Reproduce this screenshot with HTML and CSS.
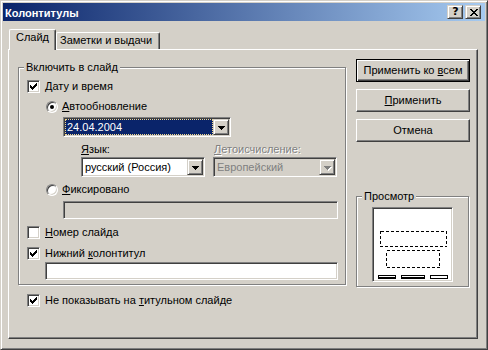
FILE: index.html
```html
<!DOCTYPE html>
<html lang="ru">
<head>
<meta charset="utf-8">
<title>Колонтитулы</title>
<link rel="stylesheet" href="styles.css">
</head>
<body>
<div class="window">
  <div class="titlebar">
    <span class="title">Колонтитулы</span>
    <div class="caption-buttons">
      <span class="cap-btn help">?</span>
      <span class="cap-btn close"><svg width="8" height="7" viewBox="0 0 8 7" shape-rendering="crispEdges"><path d="M0 0h2v1h-2z M6 0h2v1h-2z M1 1h2v1h-2z M5 1h2v1h-2z M2 2h4v1h-4z M3 3h2v1h-2z M2 4h4v1h-4z M1 5h2v1h-2z M5 5h2v1h-2z M0 6h2v1h-2z M6 6h2v1h-2z" fill="#000"/></svg></span>
    </div>
  </div>
  <div class="client">
    <div class="tabs">
      <div class="tab active">Слайд</div>
      <div class="tab">Заметки и выдачи</div>
    </div>
    <div class="panel">
      <div class="left-col">
        <fieldset class="group main-group">
          <legend>Включить в слайд</legend>
          <div class="row">
            <span class="cb"><svg class="check" width="11" height="11" viewBox="0 0 11 11" shape-rendering="crispEdges"><path d="M8 2h1v1h-1z M7 3h2v1h-2z M2 4h1v1h-1z M6 4h3v1h-3z M2 5h2v1h-2z M5 5h3v1h-3z M2 6h5v1h-5z M3 7h3v1h-3z M4 8h1v1h-1z" fill="#000"/></svg></span>
            <span><u>Д</u>ату и время</span>
          </div>
          <div class="sub">
            <div class="row row-radio1">
              <span class="rb on"></span>
              <span><u>А</u>втообновление</span>
            </div>
            <div class="combo date">
              <div class="combo-field selected">24.04.2004</div>
              <span class="drop"><svg width="7" height="4" viewBox="0 0 7 4" shape-rendering="crispEdges"><path d="M0 0h7v1h-1v1h-1v1h-1v1h-1v-1h-1v-1h-1v-1h-1z" fill="#000"/></svg></span>
            </div>
            <div class="lang-grid">
              <span class="lbl"><u>Я</u>зык:</span>
              <span class="lbl disabled"><u>Л</u>етоисчисление:</span>
              <div class="combo">
                <div class="combo-field">русский (Россия)</div>
                <span class="drop"><svg width="7" height="4" viewBox="0 0 7 4" shape-rendering="crispEdges"><path d="M0 0h7v1h-1v1h-1v1h-1v1h-1v-1h-1v-1h-1v-1h-1z" fill="#000"/></svg></span>
              </div>
              <div class="combo off">
                <div class="combo-field">Европейский</div>
                <span class="drop"><svg width="8" height="5" viewBox="0 0 8 5" shape-rendering="crispEdges"><path d="M1 1h7v1h-1v1h-1v1h-1v1h-1v-1h-1v-1h-1v-1h-1z" fill="#fff"/><path d="M0 0h7v1h-1v1h-1v1h-1v1h-1v-1h-1v-1h-1v-1h-1z" fill="#808080"/></svg></span>
              </div>
            </div>
            <div class="row row-radio2">
              <span class="rb"></span>
              <span><u>Ф</u>иксировано</span>
            </div>
            <div class="edit off fixed"></div>
          </div>
          <div class="row row-num">
            <span class="cb"></span>
            <span><u>Н</u>омер слайда</span>
          </div>
          <div class="row row-footer">
            <span class="cb"><svg class="check" width="11" height="11" viewBox="0 0 11 11" shape-rendering="crispEdges"><path d="M8 2h1v1h-1z M7 3h2v1h-2z M2 4h1v1h-1z M6 4h3v1h-3z M2 5h2v1h-2z M5 5h3v1h-3z M2 6h5v1h-5z M3 7h3v1h-3z M4 8h1v1h-1z" fill="#000"/></svg></span>
            <span>Нижний <u>к</u>олонтитул</span>
          </div>
          <div class="edit footer-edit"></div>
        </fieldset>
        <div class="row row-title">
          <span class="cb"><svg class="check" width="11" height="11" viewBox="0 0 11 11" shape-rendering="crispEdges"><path d="M8 2h1v1h-1z M7 3h2v1h-2z M2 4h1v1h-1z M6 4h3v1h-3z M2 5h2v1h-2z M5 5h3v1h-3z M2 6h5v1h-5z M3 7h3v1h-3z M4 8h1v1h-1z" fill="#000"/></svg></span>
          <span>Не показывать на <u>т</u>итульном слайде</span>
        </div>
      </div>
      <div class="right-col">
        <div class="btn default"><span>Применить ко <u>в</u>сем</span></div>
        <div class="btn"><span><u>П</u>рименить</span></div>
        <div class="btn"><span>Отмена</span></div>
        <fieldset class="group preview-group">
          <legend>Просмотр</legend>
          <div class="preview">
            <svg width="77" height="71" viewBox="0 0 77 71" shape-rendering="crispEdges">
              <rect x="6.5" y="22.5" width="66" height="15" fill="none" stroke="#000" stroke-width="1" stroke-dasharray="3 2"/>
              <rect x="12.5" y="41.5" width="53" height="17" fill="none" stroke="#000" stroke-width="1" stroke-dasharray="3 2"/>
              <rect x="4" y="66" width="18" height="4" fill="#000"/>
              <rect x="5" y="67" width="16" height="1" fill="#fff"/>
              <rect x="27" y="66" width="24" height="4" fill="#000"/>
              <rect x="28" y="67" width="22" height="1" fill="#fff"/>
              <rect x="56.5" y="66.5" width="17" height="3" fill="#fff" stroke="#000" stroke-width="1"/>
            </svg>
          </div>
        </fieldset>
      </div>
    </div>
  </div>
</div>
</body>
</html>
```

FILE: styles.css
```css
* {
  box-sizing: border-box;
}

html,
body {
  margin: 0;
  padding: 0;
}

body {
  width: 488px;
  height: 350px;
  overflow: hidden;
  background: #d4d0c8;
  color: #000;
  font: 11px/13px "Liberation Sans", Arial, sans-serif;
}

u {
  text-decoration: underline;
  text-underline-offset: 1px;
}

.window {
  width: 488px;
  height: 350px;
  display: flex;
  flex-direction: column;
  padding: 2px;
  background: #d4d0c8;
  border: 1px solid;
  border-color: #d4d0c8 #404040 #404040 #d4d0c8;
  box-shadow: inset 1px 1px 0 #fff, inset -1px -1px 0 #808080;
}

/* title bar */
.titlebar {
  height: 18px;
  flex: none;
  display: flex;
  align-items: center;
  padding-left: 2px;
  background: linear-gradient(to right, #0a246a, #a6caf0);
}

.title {
  color: #fff;
  font: bold 11px/18px "Liberation Sans", Arial, sans-serif;
  padding-top: 1px;
}

.caption-buttons {
  margin-left: auto;
  margin-right: 4px;
  display: flex;
  gap: 2px;
}

.cap-btn {
  width: 16px;
  height: 14px;
  display: flex;
  align-items: center;
  justify-content: center;
  background: #d4d0c8;
  border: 1px solid;
  border-color: #d4d0c8 #404040 #404040 #d4d0c8;
  box-shadow: inset 1px 1px 0 #fff, inset -1px -1px 0 #808080;
}

.cap-btn.help {
  font: bold 11px/12px "DejaVu Sans", sans-serif;
  padding-left: 1px;
}

.cap-btn.close svg {
  display: block;
  margin-left: 1px;
}

/* client area */
.client {
  flex: 1;
  display: flex;
  flex-direction: column;
  padding: 8px 7px 8px 5px;
}

.tabs {
  height: 20px;
  flex: none;
  display: flex;
  align-items: flex-end;
  padding-left: 1px;
  position: relative;
  z-index: 1;
}

.tab {
  height: 17px;
  width: 104px;
  padding-left: 3px;
  line-height: 15px;
  background: #d4d0c8;
  border-top: 1px solid #fff;
  border-left: 1px solid #fff;
  border-right: 1px solid #404040;
  border-top-left-radius: 2px;
  border-top-right-radius: 2px;
  box-shadow: inset -1px 0 0 #808080;
}

.tab.active {
  width: 47px;
  height: 21px;
  margin-bottom: -1px;
  padding-left: 6px;
  line-height: 15px;
}

.panel {
  flex: 1;
  display: flex;
  gap: 10px;
  padding: 9px 7px 0 9px;
  border: 1px solid;
  border-color: #fff #404040 #404040 #fff;
  box-shadow: inset -1px -1px 0 #808080;
}

/* group boxes */
.group {
  margin: 0;
  min-width: 0;
  border: 1px solid #808080;
  box-shadow: inset 1px 1px 0 #fff, 1px 1px 0 #fff;
}

.group legend {
  padding: 0 2px;
  line-height: 13px;
  background: #d4d0c8;
}

.left-col {
  width: 328px;
  flex: none;
}

.main-group {
  width: 328px;
  margin-top: 2px;
  padding: 6px 7px 4px 8px;
}

.main-group legend {
  margin-left: -3px;
}

.row {
  display: flex;
  align-items: center;
  height: 13px;
  white-space: nowrap;
}

.cb {
  width: 13px;
  height: 13px;
  flex: none;
  margin-right: 5px;
  background: #fff;
  border: 1px solid;
  border-color: #808080 #fff #fff #808080;
  box-shadow: inset 1px 1px 0 #404040, inset -1px -1px 0 #d4d0c8;
}

.cb svg {
  display: block;
}

.rb {
  width: 12px;
  height: 12px;
  flex: none;
  margin-right: 4px;
  display: flex;
  align-items: center;
  justify-content: center;
  border-radius: 50%;
  background: #fff;
  border: 1px solid;
  border-color: #808080 #fff #fff #808080;
  box-shadow: inset 1px 1px 0 #404040, inset -1px -1px 0 #d4d0c8;
}

.rb.on::after {
  content: "";
  width: 4px;
  height: 4px;
  border-radius: 50%;
  background: #000;
}

.sub {
  padding-left: 19px;
}

.row-radio1 {
  margin-top: 7px;
}

/* combos & edits */
.combo {
  height: 20px;
  display: flex;
  background: #fff;
  border: 1px solid;
  border-color: #808080 #fff #fff #808080;
  box-shadow: inset 1px 1px 0 #404040, inset -1px -1px 0 #d4d0c8;
  padding: 1px;
}

.combo-field {
  flex: 1;
  min-width: 0;
  padding-left: 2px;
  line-height: 16px;
  white-space: nowrap;
  overflow: hidden;
}

.combo-field.selected {
  background: #0a246a;
  color: #fff;
  outline: 1px dotted #f2d88c;
  outline-offset: -1px;
  padding-left: 2px;
}

.drop {
  width: 16px;
  height: 16px;
  flex: none;
  display: flex;
  align-items: center;
  justify-content: center;
  padding-top: 1px;
  background: #d4d0c8;
  border: 1px solid;
  border-color: #d4d0c8 #404040 #404040 #d4d0c8;
  box-shadow: inset 1px 1px 0 #fff, inset -1px -1px 0 #808080;
}

.drop svg {
  display: block;
}

.combo.date {
  width: 168px;
  margin: 4px 0 0 17px;
}

.combo.off {
  background: #d4d0c8;
  color: #808080;
}

.combo.off .drop {
  padding-left: 1px;
  padding-top: 2px;
}

.lang-grid {
  display: grid;
  grid-template-columns: 124px 124px;
  grid-template-rows: 13px 20px;
  column-gap: 8px;
  row-gap: 1px;
  margin: 6px 0 0 35px;
}

.lbl {
  white-space: nowrap;
}

.lbl.disabled {
  color: #808080;
  text-shadow: 1px 1px 0 #fff;
  padding-left: 1px;
}

.row-radio2 {
  margin-top: 6px;
}

.edit {
  height: 18px;
  background: #fff;
  border: 1px solid;
  border-color: #808080 #fff #fff #808080;
  box-shadow: inset 1px 1px 0 #404040, inset -1px -1px 0 #d4d0c8;
}

.edit.off {
  background: #d4d0c8;
}

.edit.fixed {
  width: 275px;
  margin: 5px 0 0 17px;
}

.row-num {
  margin-top: 7px;
}

.row-footer {
  margin-top: 8px;
}

.footer-edit {
  width: 293px;
  margin: 2px 0 0 18px;
}

.row-title {
  margin: 9px 0 0 9px;
}

/* right column */
.right-col {
  width: 114px;
  flex: none;
  display: flex;
  flex-direction: column;
}

.btn {
  height: 23px;
  display: flex;
  align-items: center;
  justify-content: center;
  white-space: nowrap;
  background: #d4d0c8;
  border: 1px solid;
  border-color: #fff #404040 #404040 #fff;
  box-shadow: inset -1px -1px 0 #808080;
}

.btn + .btn {
  margin-top: 7px;
}

.btn.default {
  border: 1px solid #000;
  box-shadow: inset 1px 1px 0 #fff, inset -1px -1px 0 #404040, inset -2px -2px 0 #808080;
}

.preview-group {
  width: 113px;
  margin-top: 48px;
  padding: 4px 0 4px 0;
}

.preview-group legend {
  margin-left: 5px;
}

.preview {
  width: 81px;
  height: 75px;
  margin: 0 auto;
  background: #fff;
  border: 1px solid;
  border-color: #808080 #fff #fff #808080;
  box-shadow: inset 1px 1px 0 #404040, inset -1px -1px 0 #d4d0c8;
  padding: 1px;
}

.preview svg {
  display: block;
}
```
